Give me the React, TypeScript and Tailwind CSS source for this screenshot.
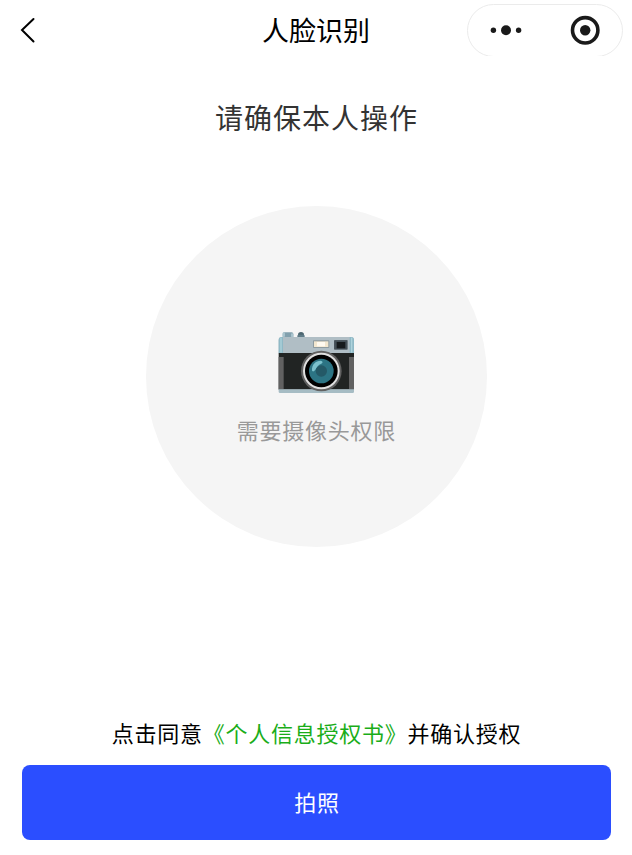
import type { ReactNode } from "react";

function BackIcon() {
  return (
    <svg width="16" height="26" viewBox="0 0 16 26" fill="none" stroke="#000000" strokeWidth="2" strokeLinecap="round">
      <path d="M13.5 2 L2 13 L13.5 24.5" />
    </svg>
  );
}

function MoreIcon() {
  return (
    <svg width="32" height="12" viewBox="0 0 32 12" fill="#1a1a1a">
      <circle cx="3.4" cy="6.2" r="2.7" />
      <circle cx="16" cy="6.2" r="5" />
      <circle cx="28.6" cy="6.2" r="2.7" />
    </svg>
  );
}

function CloseIcon() {
  return (
    <svg width="30" height="30" viewBox="0 0 30 30">
      <circle cx="15.2" cy="15.3" r="12.7" fill="none" stroke="#1a1a1a" strokeWidth="3.6" />
      <circle cx="15.2" cy="15.3" r="5.2" fill="#1a1a1a" />
    </svg>
  );
}

function CameraIcon() {
  return (
    <svg width="77" height="63" viewBox="36 33 231 189">
      {/* dials */}
      <rect x="50" y="37" width="32" height="20" rx="5" fill="#82a0ad" />
      <rect x="50" y="37" width="7" height="14" rx="3" fill="#a9c4ce" />
      <rect x="75" y="40" width="7" height="12" rx="3" fill="#a9c4ce" />
      <ellipse cx="105" cy="44" rx="9" ry="8" fill="#4c6670" />
      <rect x="94" y="44" width="22" height="9" rx="4" fill="#5f7b87" />
      {/* body */}
      <path d="M38 100 V60 Q38 51 47 51 H255 Q264 51 264 60 V100 Z" fill="#b0bec5" />
      <path d="M38 100 V60 Q38 51 47 51 H51 V100 Z" fill="#8fb9c6" />
      <path d="M251 100 V51 H255 Q264 51 264 60 V100 Z" fill="#8fb9c6" />
      <rect x="43" y="53" width="4" height="45" fill="#aed3dc" />
      <rect x="255" y="53" width="4" height="45" fill="#aed3dc" />
      <rect x="38" y="99" width="226" height="110" fill="#212423" />
      <rect x="38" y="111" width="15" height="97" fill="#616161" />
      <rect x="249" y="111" width="15" height="97" fill="#616161" />
      <path d="M38 208 H264 V215 Q264 219 260 219 H42 Q38 219 38 215 Z" fill="#a6bcc4" />
      {/* flash and viewfinder */}
      <rect x="141" y="61" width="49" height="23" rx="2" fill="#8e9ba0" />
      <rect x="144" y="64" width="43" height="17" fill="#f3e7cf" />
      <rect x="153" y="66" width="24" height="13" fill="#fffaf0" />
      <rect x="204" y="60" width="41" height="29" rx="2" fill="#4e5960" />
      <rect x="206" y="63" width="37" height="24" fill="#455057" />
      <rect x="212" y="66" width="26" height="19" fill="#161a1c" />
      {/* lens */}
      <circle cx="166" cy="153" r="61" fill="#616161" />
      <circle cx="166" cy="153" r="55" fill="#e0e0e0" />
      <circle cx="166" cy="153" r="49" fill="#000000" />
      <circle cx="166" cy="153" r="37" fill="#2c7484" />
      <path d="M138 151 C137 134 149 122 164 122 C170 123 172 128 166 131 C156 135 153 141 149 148 C145 155 139 157 138 151 Z" fill="#7cc2ce" />
      <circle cx="166" cy="153" r="17" fill="#245967" />
    </svg>
  );
}

function NavBar({ children }: { children: ReactNode }) {
  return (
    <header className="grid h-[60px] grid-cols-[1fr_auto_1fr] items-center">
      <button aria-label="返回" className="ml-5 flex h-[26px] w-4">
        <BackIcon />
      </button>
      <h1 className="text-[27px] leading-[40px] text-black">{children}</h1>
      {/* the capsule's lower edge is cut off by the bar */}
      <div className="mt-1 mr-[9px] h-[52px] w-[156px] self-start justify-self-end overflow-hidden">
        <div className="flex h-[53px] items-center justify-between rounded-full border border-[#ebebeb] px-[22px] pb-px">
          <button aria-label="更多">
            <MoreIcon />
          </button>
          <button aria-label="关闭">
            <CloseIcon />
          </button>
        </div>
      </div>
    </header>
  );
}

export default function App() {
  return (
    <div className="flex h-[855px] w-[632px] flex-col bg-white font-['Noto_Sans_CJK_SC',sans-serif]">
      <NavBar>人脸识别</NavBar>
      <main className="flex flex-1 flex-col items-center">
        <h2 className="mt-[36px] mb-px pl-px text-[28px] leading-[42px] tracking-[1px] text-[#333333]">请确保本人操作</h2>
        <div className="mt-[67px] flex h-[341px] w-[341px] flex-col items-center rounded-full bg-[#f5f5f5] pt-[125px]">
          <CameraIcon />
          <p className="mt-[19px] pl-px text-[22px] leading-[32px] tracking-[0.75px] text-[#999999]">需要摄像头权限</p>
        </div>
      </main>
      <footer className="px-[22px] pb-[15px]">
        <p className="mb-4 pl-px text-center text-[22px] leading-[34px] tracking-[0.75px] text-black">
          点击同意<a className="text-[#1aad19]">《个人信息授权书》</a>并确认授权
        </p>
        <button className="h-[75px] w-[589px] rounded-lg bg-[#2b4eff] pb-0.5 pl-px text-[22px] tracking-[0.75px] text-white">
          拍照
        </button>
      </footer>
    </div>
  );
}
